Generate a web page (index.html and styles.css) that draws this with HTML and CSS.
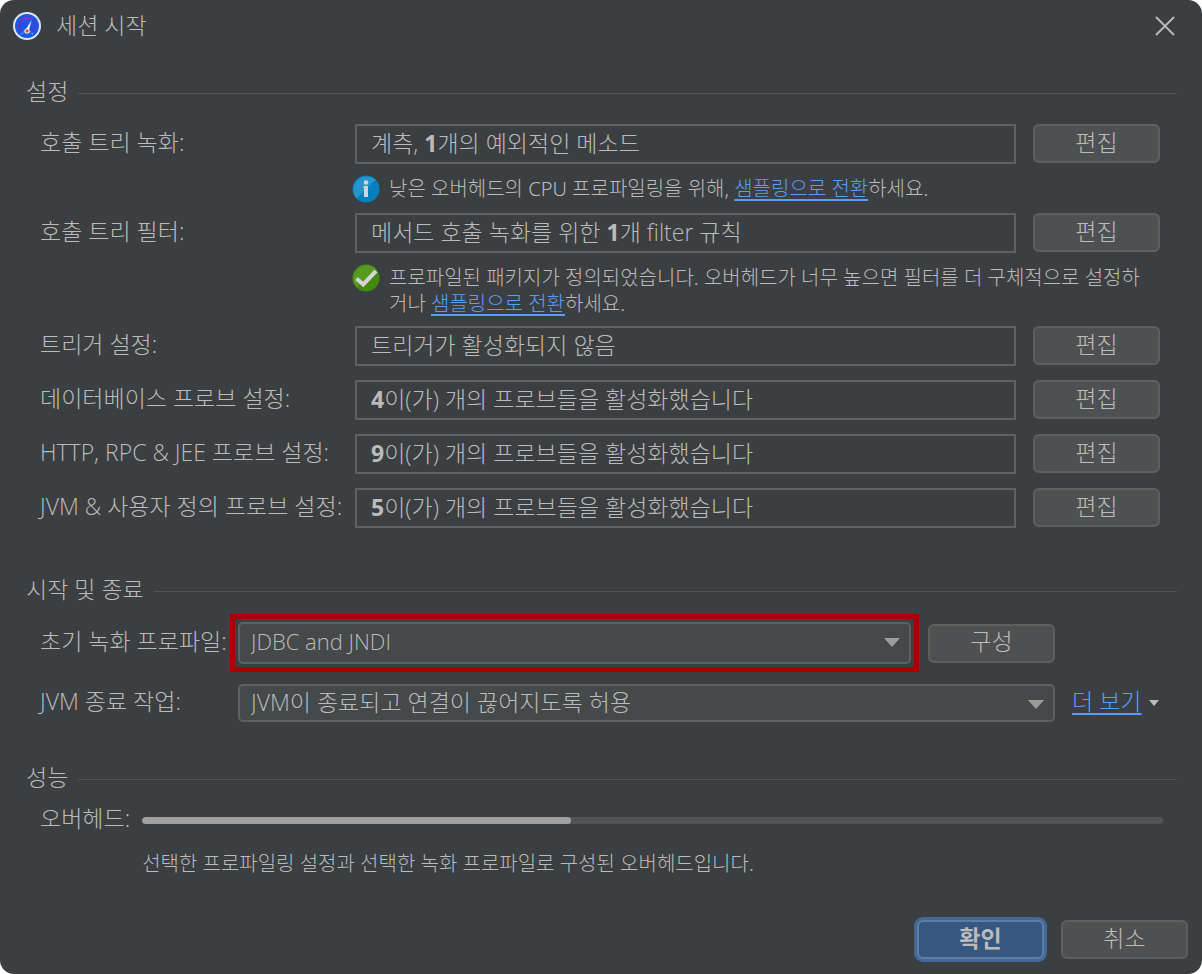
FILE: index.html
```html
<!DOCTYPE html>
<html lang="ko">

<head>
    <meta charset="UTF-8">
    <title>세션 시작</title>
    <link rel="stylesheet" href="styles.css">
</head>

<body>
    <main class="dialog">
        <header class="titlebar">
            <svg class="app-icon" viewBox="0 0 28 28" aria-hidden="true">
                <circle cx="14" cy="14" r="14" fill="#d9e6f8"/>
                <circle cx="14" cy="14" r="12" fill="#1f56e3"/>
                <path d="M7.5 18.5A8 8 0 1 1 20.5 18.5" fill="none" stroke="#5a35c8" stroke-width="1.6"/>
                <path d="M8 9A8 8 0 0 1 18.5 7.2" fill="none" stroke="#9a2fc4" stroke-width="1.6"/>
                <path d="M8 22.5A7 7 0 0 1 20 22.5" fill="none" stroke="#4f9cf0" stroke-width="1.4" stroke-dasharray="2 1"/>
                <path d="M18.6 8L15.6 19.4L12.4 18.2Z" fill="#f2f6ff"/>
                <circle cx="14" cy="19" r="2.6" fill="#fff"/>
                <circle cx="14" cy="19" r="1.7" fill="#f0452c"/>
            </svg>
            <h1>세션 시작</h1>
            <button class="close" aria-label="닫기">
                <svg viewBox="0 0 20 20"><path d="M1 1L19 19M19 1L1 19" stroke="#bbb" stroke-width="1.8"/></svg>
            </button>
        </header>

        <section class="settings">
            <h2>설정</h2>
            <div class="row">
                <span class="label">호출 트리 녹화:</span>
                <div class="field">계측, <b>1</b>개의 예외적인 메소드</div>
                <button>편집</button>
            </div>
            <div class="hint">
                <svg viewBox="0 0 28 28" aria-hidden="true">
                    <circle cx="14" cy="14" r="13.5" fill="#0480bd"/>
                    <path d="M4.5 23.5A13.5 13.5 0 0 1 23.5 4.5Z" fill="#2795cb"/>
                    <path d="M11.5 11H16V22H12V13H11.5Z" fill="#d4d4d4"/>
                    <circle cx="14" cy="7.5" r="2.3" fill="#d4d4d4"/>
                </svg>
                <p>낮은 오버헤드의 CPU 프로파일링을 위해, <a href="#">샘플링으로 전환</a>하세요.</p>
            </div>
            <div class="row">
                <span class="label">호출 트리 필터:</span>
                <div class="field">메서드 호출 녹화를 위한 <b>1</b>개 filter 규칙</div>
                <button>편집</button>
            </div>
            <div class="hint">
                <svg viewBox="0 0 28 28" aria-hidden="true">
                    <circle cx="14" cy="14" r="13.5" fill="#458911"/>
                    <path d="M4.5 23.5A13.5 13.5 0 0 1 23.5 4.5Z" fill="#559c1d"/>
                    <path d="M4.5 14.5L11.2 20.4L24 7" fill="none" stroke="#d4d4d4" stroke-width="4"/>
                </svg>
                <p>프로파일된 패키지가 정의되었습니다. 오버헤드가 너무 높으면 필터를 더 구체적으로 설정하거나 <a href="#">샘플링으로 전환</a>하세요.</p>
            </div>
            <div class="row">
                <span class="label">트리거 설정:</span>
                <div class="field">트리거가 활성화되지 않음</div>
                <button>편집</button>
            </div>
            <div class="row">
                <span class="label">데이터베이스 프로브 설정:</span>
                <div class="field"><b>4</b>이(가) 개의 프로브들을 활성화했습니다</div>
                <button>편집</button>
            </div>
            <div class="row">
                <span class="label">HTTP, RPC &amp; JEE 프로브 설정:</span>
                <div class="field"><b>9</b>이(가) 개의 프로브들을 활성화했습니다</div>
                <button>편집</button>
            </div>
            <div class="row">
                <span class="label">JVM &amp; 사용자 정의 프로브 설정:</span>
                <div class="field"><b>5</b>이(가) 개의 프로브들을 활성화했습니다</div>
                <button>편집</button>
            </div>
        </section>

        <section class="startup">
            <h2>시작 및 종료</h2>
            <div class="row">
                <label for="profile">초기 녹화 프로파일:</label>
                <div class="select highlight">
                    <select id="profile">
                        <option>JDBC and JNDI</option>
                    </select>
                    <svg viewBox="0 0 16 9" aria-hidden="true"><path d="M0 0H16L8 9Z" fill="#9c9c9c"/></svg>
                </div>
                <button>구성</button>
            </div>
            <div class="row">
                <label for="exit-action">JVM 종료 작업:</label>
                <div class="select wide">
                    <select id="exit-action">
                        <option>JVM이 종료되고 연결이 끊어지도록 허용</option>
                    </select>
                    <svg viewBox="0 0 16 9" aria-hidden="true"><path d="M0 0H16L8 9Z" fill="#9c9c9c"/></svg>
                </div>
                <div class="more">
                    <a href="#">더 보기</a>
                    <svg viewBox="0 0 10 6" aria-hidden="true"><path d="M0 0H10L5 6Z" fill="#bbb"/></svg>
                </div>
            </div>
        </section>

        <section class="performance">
            <h2>성능</h2>
            <div class="overhead">
                <label for="overhead">오버헤드:</label>
                <progress id="overhead" value="42" max="100"></progress>
                <p>선택한 프로파일링 설정과 선택한 녹화 프로파일로 구성된 오버헤드입니다.</p>
            </div>
        </section>

        <footer>
            <button class="primary">확인</button>
            <button>취소</button>
        </footer>
    </main>
</body>

</html>
```
FILE: styles.css
```css
* {
    box-sizing: border-box;
}

body {
    margin: 0;
    background: #fff;
    color: #bbb;
    font-family: "Noto Sans", "Noto Sans CJK KR", sans-serif;
    font-size: 23px;
    font-weight: 300;
    line-height: 28px;
}

h1,
h2,
p {
    margin: 0;
    font-size: inherit;
    font-weight: inherit;
}

.dialog {
    display: flex;
    flex-direction: column;
    min-height: 100vh;
    padding: 0 14px 15px 26px;
    background: #3c3f41;
    border-radius: 14px;
}

.titlebar {
    display: flex;
    align-items: center;
    gap: 15px;
    height: 52px;
    margin-left: -13px;
}

h1 {
    padding-bottom: 3px;
}

.app-icon {
    width: 28px;
    height: 28px;
}

button {
    width: 127px;
    height: 39px;
    padding: 0 0 4px;
    border: 2px solid #5e6060;
    border-radius: 6px;
    background: #4e5052;
    color: #bbb;
    font: inherit;
    line-height: 28px;
}

.close {
    width: 20px;
    height: 20px;
    margin-left: auto;
    margin-right: 13px;
    padding: 0;
    border: none;
    background: none;
}

.close svg {
    display: block;
}

section {
    margin-right: 11px;
}

h2 {
    display: flex;
    align-items: center;
    gap: 10px;
}

h2::after {
    content: "";
    flex: 1;
    height: 1px;
    margin-top: 4px;
    background: #515456;
}

.settings {
    margin-top: 25px;
}

.settings h2 {
    margin-bottom: 19px;
}

.row {
    display: grid;
    align-items: center;
    margin: 0 17px 14px 14px;
}

.settings .row {
    grid-template-columns: 315px 1fr 127px;
}

.settings button {
    align-self: start;
}

.label,
label {
    padding-bottom: 4px;
}

.label,
label,
.field,
select {
    font-family: "Open Sans", "Noto Sans CJK KR", sans-serif;
}

.field {
    height: 40px;
    margin-right: 17px;
    padding: 0 14px;
    border: 2px solid #5e6162;
    line-height: 34px;
}

.field b {
    font-weight: 700;
}

.hint {
    display: flex;
    align-items: flex-start;
    gap: 9px;
    margin: -3px 27px 10px 326px;
    font-size: 20px;
    line-height: 26px;
}

.hint svg {
    flex: none;
    width: 28px;
    height: 28px;
}

.hint p {
    padding-top: 1px;
    margin-bottom: -1px;
}

a {
    color: #589df6;
    text-decoration: underline;
    text-decoration-thickness: 2px;
    text-underline-offset: 3px;
}

.startup {
    margin-top: 33px;
}

.startup h2 {
    margin-bottom: 19px;
}

.startup .row {
    grid-template-columns: 198px 1fr 127px 105px;
    margin-bottom: 20px;
}

.select {
    position: relative;
    height: 42px;
    margin-right: 17px;
}

.wide {
    grid-column: 2 / 4;
    height: 38px;
    margin-right: 0;
}

.highlight {
    outline: 5px solid #a80000;
    outline-offset: 3px;
}

select {
    appearance: none;
    width: 100%;
    height: 100%;
    padding: 0 40px 4px 11px;
    border: 2px solid #5e6162;
    border-radius: 5px;
    background: #45494a;
    color: #bbb;
    font-size: inherit;
    font-weight: inherit;
}

.highlight select {
    font-size: 22px;
}

.select svg {
    position: absolute;
    top: 16px;
    right: 11px;
    width: 16px;
    height: 9px;
    pointer-events: none;
}

.more {
    display: flex;
    align-items: center;
    gap: 8px;
    padding-left: 17px;
    white-space: nowrap;
}

.more a {
    padding-bottom: 4px;
}

.more svg {
    flex: none;
    width: 10px;
    height: 6px;
}

.performance {
    margin-top: 21px;
}

.overhead {
    display: grid;
    grid-template-columns: auto 1fr;
    align-items: center;
    column-gap: 12px;
    row-gap: 14px;
    margin: 13px 14px 0 14px;
}

.overhead p {
    grid-column: 2;
    font-size: 20px;
}

progress {
    appearance: none;
    width: 100%;
    height: 7px;
    border: none;
    border-radius: 4px;
    background: #515456;
    overflow: hidden;
}

progress::-webkit-progress-bar {
    background: #515456;
}

progress::-webkit-progress-value {
    background: #a0a0a0;
    border-radius: 4px;
}

footer {
    display: flex;
    justify-content: flex-end;
    gap: 17px;
    margin-top: auto;
}

.primary {
    border-color: #5f7da2;
    background: #365880;
    box-shadow: 0 0 0 3px #43689a;
    font-weight: 700;
}
```
